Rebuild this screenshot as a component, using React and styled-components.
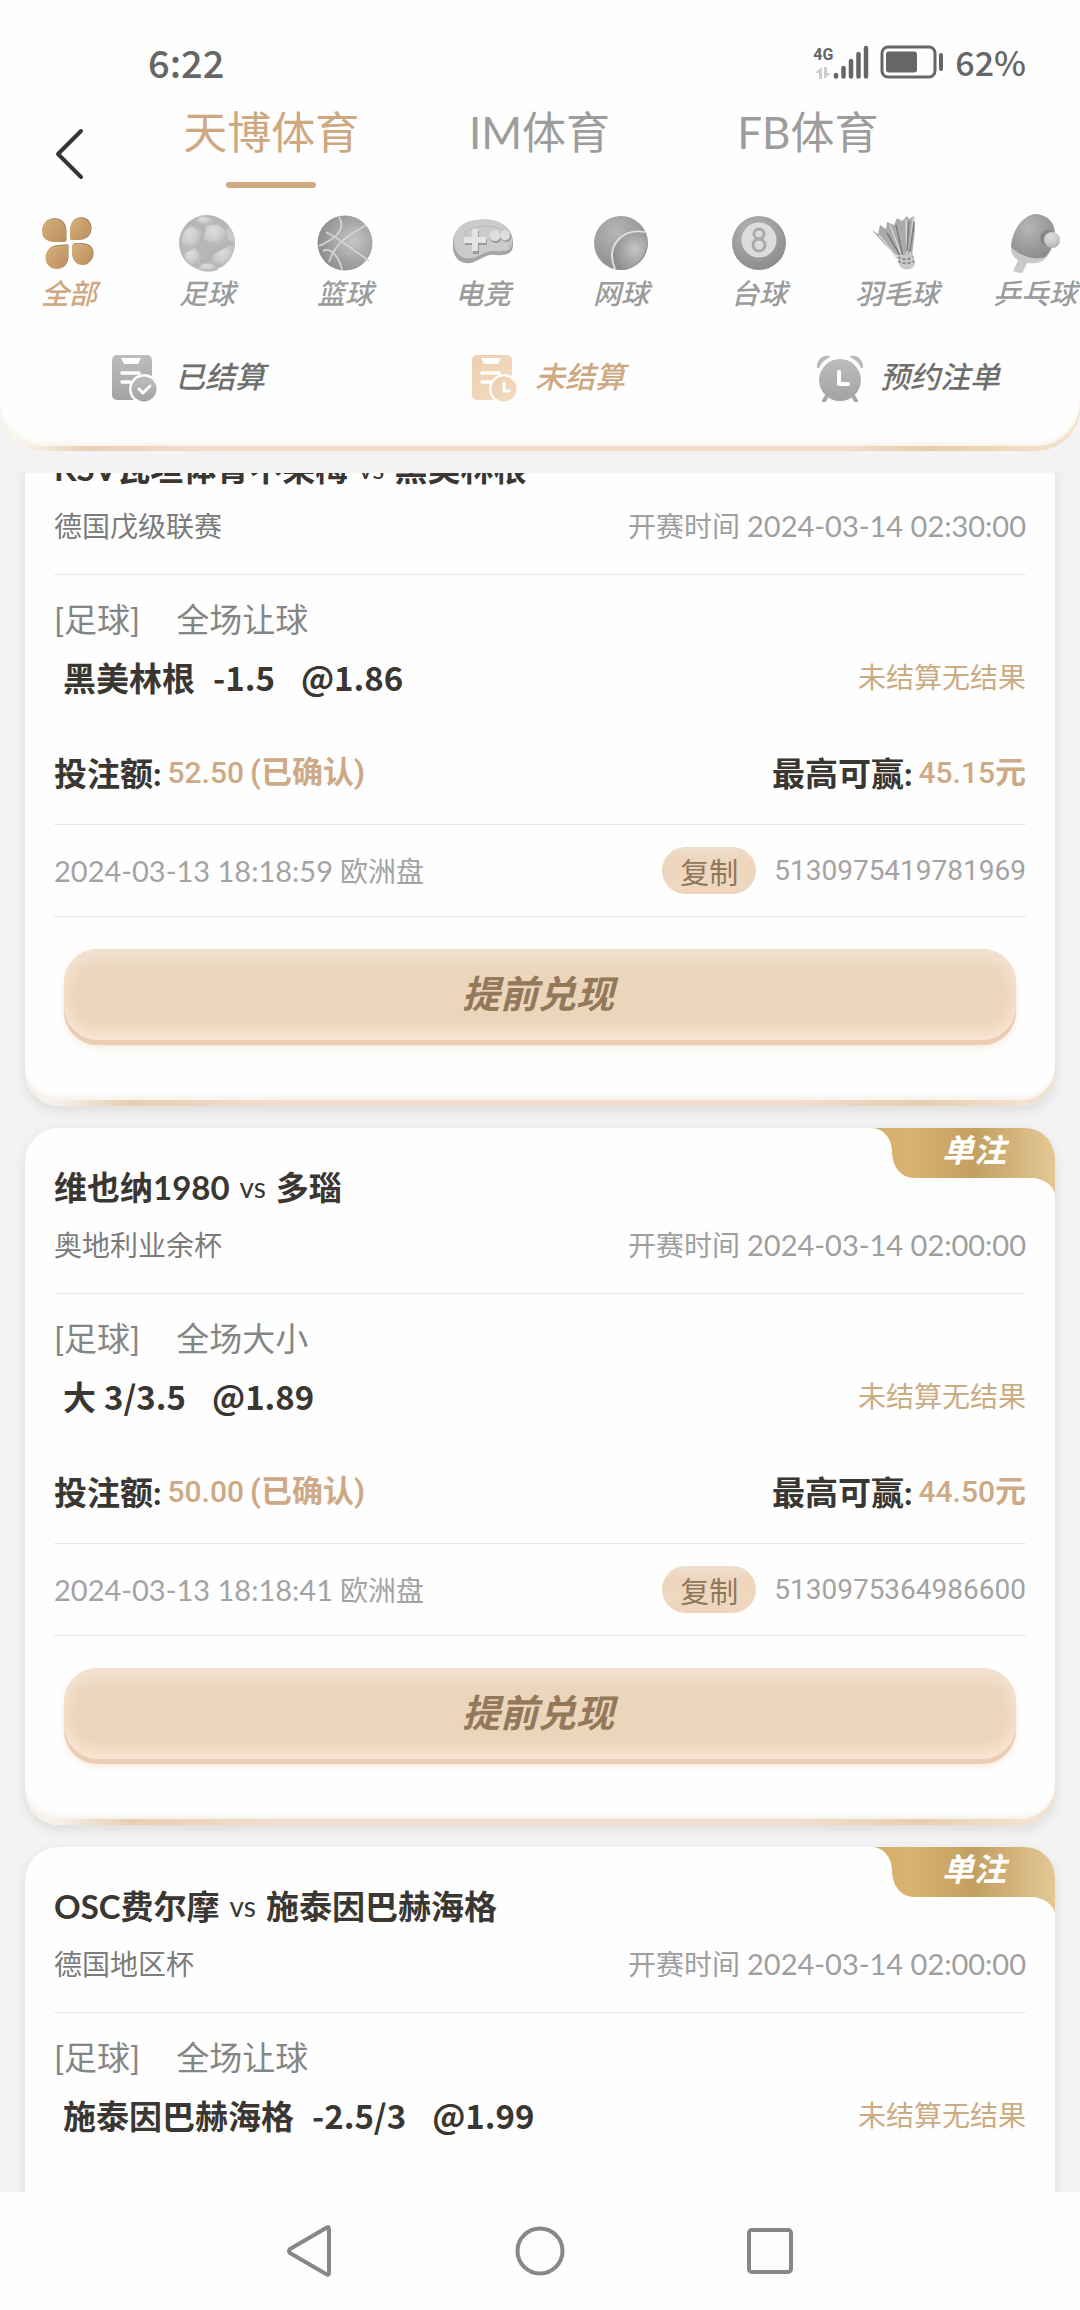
import React, { useLayoutEffect, useRef, useState } from 'react';
import styled, { createGlobalStyle } from 'styled-components';

const GlobalStyle = createGlobalStyle`
  *, *::before, *::after { box-sizing: border-box; }
  body {
    margin: 0;
    background: #f3f3f4;
    font-family: Lato, "Noto Sans CJK SC", sans-serif;
  }
  button {
    margin: 0;
    padding: 0;
    border: 0;
    background: none;
    color: inherit;
    font: inherit;
    cursor: pointer;
  }
  h2, p { margin: 0; font: inherit; }
  svg { display: block; flex: none; }
`;

const gold = '#cda880';

const Screen = styled.div`
  display: flex;
  flex-direction: column;
  height: 100vh;
  overflow: hidden;
`;

/* ---------- header ---------- */

const HeaderEdge = styled.header`
  flex: none;
  margin-bottom: 22px;
  padding-bottom: 5px;
  border-radius: 0 0 44px 44px;
  background: linear-gradient(90deg, #faf3ea 2%, #e9cfb4 8%, #f3ddcf 20%, #f3ddcf 78%, #e5cdab 86%, #f3e0c8 97%);
`;

const HeaderPanel = styled.div`
  padding-bottom: 44px;
  border-radius: 0 0 44px 44px;
  background: #fefefe;
  box-shadow: inset 0 -6px 5px -3px #f8f2e9;
`;

const StatusBar = styled.div`
  display: flex;
  align-items: center;
  justify-content: space-between;
  height: 92px;
  padding: 32px 54px 0 148px;
  color: #666;
`;

const Clock = styled.span`
  font-size: 38px;
  line-height: 56px;
  font-weight: 500;
  font-family: "Noto Sans CJK SC", sans-serif;
`;

const StatusIcons = styled.div`
  display: flex;
  align-items: center;
  gap: 11px;
`;

const Network = styled.div`
  display: flex;
  align-items: flex-end;
`;

const NetworkType = styled.div`
  display: flex;
  flex-direction: column;
  align-items: center;
  gap: 3px;
  font: 700 16px/18px Roboto, sans-serif;
`;

const Percent = styled.span`
  font: 500 34px/56px "Noto Sans CJK SC", sans-serif;
`;

const TopRow = styled.div`
  display: flex;
  height: 104px;
  padding-right: 138px;
`;

const BackButton = styled.button`
  display: flex;
  align-items: center;
  justify-content: center;
  width: 137px;
  margin-top: 20px;
`;

const Tabs = styled.nav`
  display: grid;
  flex: 1;
  grid-template-columns: repeat(3, 1fr);
`;

const Tab = styled.button`
  display: flex;
  flex-direction: column;
  align-items: center;
  gap: 20px;
  padding-top: 10px;
  color: ${(p) => (p.$active ? gold : '#9d9d9c')};
  font-size: 44px;
  line-height: 60px;
  white-space: nowrap;

  &::after {
    width: 90px;
    height: 6px;
    border-radius: 3px;
    background: ${(p) => (p.$active ? '#d1a981' : 'transparent')};
    content: '';
  }
`;

const Sports = styled.div`
  display: flex;
  padding-top: 17px;
  overflow: hidden;
`;

const Sport = styled.button`
  display: flex;
  flex: 0 0 138px;
  flex-direction: column;
  align-items: center;
  gap: 2px;
  padding-bottom: 2px;
  color: ${(p) => (p.$active ? gold : '#9c9c9c')};
  font-size: 28px;
  font-style: italic;
  font-weight: 500;
  line-height: 36px;
`;

const Filters = styled.div`
  display: grid;
  grid-template-columns: repeat(3, 1fr);
  padding-top: 41px;
`;

const Filter = styled.button`
  display: flex;
  align-items: center;
  justify-content: center;
  gap: 16px;
  padding-left: 16px;
  color: ${(p) => (p.$active ? gold : '#6f6f6d')};
  font-size: 30px;
  font-style: italic;
  font-weight: 500;
  line-height: 44px;
`;

const FilterName = styled.span`
  padding-bottom: 4px;
`;

/* ---------- bet list ---------- */

const List = styled.main`
  display: flex;
  flex: 1;
  flex-direction: column;
  gap: 22px;
  min-height: 0;
  padding: 0 25px;
  overflow-y: auto;
  scrollbar-width: none;
`;

const CardEdge = styled.article`
  position: relative;
  flex: none;
  padding-bottom: 6px;
  border-radius: 34px;
  background: linear-gradient(90deg, #f6f1ea 3%, #e8cfb3 10%, #f3ddce 25%, #f3ddce 75%, #e6ceb0 87%, #f4e2d0 97%);
  box-shadow: 0 4px 12px rgba(60, 50, 40, 0.12);
`;

const CardBody = styled.div`
  padding: 35px 29px 55px;
  border-radius: 34px;
  background: #fefefe;
  box-shadow: inset 0 -6px 5px -3px #f6f1ea;
`;

const Title = styled.h2`
  display: flex;
  align-items: center;
  gap: 10px;
  color: #3a3631;
  font-size: 33px;
  font-weight: 700;
  line-height: 48px;
`;

const Versus = styled.span`
  font-size: 28px;
  font-weight: 400;
`;

const Row = styled.div`
  display: flex;
  align-items: center;
  justify-content: space-between;
`;

const LeagueRow = styled(Row)`
  height: 83px;
  padding-bottom: 14px;
  border-bottom: 1px solid #e9e9e9;
  color: #7b7b7b;
  font-size: 28px;
  line-height: 40px;
`;

const Kickoff = styled.span`
  display: flex;
  gap: 7px;
  color: #9f9f9f;
`;

const Stamp = styled.time`
  font-size: 29px;
`;

const Market = styled.p`
  display: flex;
  gap: 36px;
  margin-top: 20px;
  color: #858585;
  font-size: 33px;
  line-height: 48px;
`;

const PickRow = styled(Row)`
  margin-top: 10px;
  padding-left: 9px;
`;

const Pick = styled.p`
  display: flex;
  color: #3a3631;
  font-family: "Noto Sans CJK SC", sans-serif;
  font-size: 33px;
  font-weight: 700;
  line-height: 48px;
`;

const Handicap = styled.span`
  margin-left: ${(p) => (p.$spaced ? 18 : 8)}px;
`;

const Odds = styled.span`
  margin-left: 26px;
`;

const Result = styled.span`
  color: #cbab82;
  font-size: 28px;
  line-height: 48px;
`;

const StakeRow = styled(Row)`
  margin-top: 48px;
  padding-bottom: 27px;
  border-bottom: 1px solid #e9e9e9;
`;

const Stake = styled.p`
  display: flex;
  gap: 6px;
  color: #3a3631;
  font-size: 33px;
  font-weight: 700;
  line-height: 48px;
`;

const Amount = styled.span`
  display: flex;
  color: #cea986;
  font-family: Roboto, "Noto Sans CJK SC", sans-serif;
  font-size: 31px;
`;

const Figure = styled.span`
  margin-right: ${(p) => (p.$spaced ? 6 : 0)}px;
  font-size: 30px;
  font-weight: 500;
`;

const RecordRow = styled(Row)`
  height: 92px;
  border-bottom: 1px solid #e6e6e6;
  color: #a3a3a3;
  font-size: 28px;
  line-height: 40px;
`;

const Placed = styled.span`
  display: flex;
  gap: 7px;
`;

const Ticket = styled.div`
  display: flex;
  align-items: center;
  gap: 18px;
  font-family: Roboto, sans-serif;
`;

const CopyButton = styled.button`
  width: 94px;
  height: 47px;
  border-radius: 24px;
  background: linear-gradient(180deg, #ebdfcb, #efd5bd 30%, #eed8bf 75%, #f1d3bd);
  color: #8f775b;
  font: 400 29px/44px "Noto Sans CJK SC", sans-serif;
`;

const CashOutButton = styled.button`
  display: block;
  width: calc(100% - 20px);
  height: 96px;
  margin: 32px 10px 0;
  padding: 0 4px 8px 0;
  border-radius: 34px;
  background: #ebd5bb;
  box-shadow:
    inset 0 -5px 0 #eacdb4,
    inset 0 -20px 14px -6px #f9e6d3,
    inset 0 14px 18px -4px #f2e2d3,
    inset 0 0 18px #f5dfc8,
    0 3px 6px #f6ebdd;
  color: #93785a;
  font-size: 38px;
  font-style: italic;
  font-weight: 700;
  line-height: 84px;
`;

const Badge = styled.div`
  position: absolute;
  top: 0;
  right: 0;
  display: grid;
  width: 182px;
  height: 66px;
  color: #fff;
  font-size: 32px;
  font-style: italic;
  font-weight: 700;
  line-height: 44px;

  > * { grid-area: 1 / 1; }
`;

const BadgeText = styled.span`
  z-index: 1;
  padding-left: 20px;
  text-align: center;
`;

/* ---------- system navigation ---------- */

const SystemNav = styled.nav`
  display: flex;
  flex: none;
  align-items: center;
  justify-content: center;
  height: 118px;
  background: #fdfdfd;
`;

const SystemButton = styled.button`
  display: flex;
  justify-content: center;
  width: 230px;
`;

/* ---------- drawings ---------- */

const Defs = () => (
  <svg width="0" height="0" style={{ position: 'absolute' }} aria-hidden="true">
    <defs>
      <linearGradient id="petal" x1="0" y1="0" x2="1" y2="1">
        <stop offset="0" stopColor="#d8b07a" /><stop offset="1" stopColor="#b98f5e" />
      </linearGradient>
      <radialGradient id="light" cx=".4" cy=".3" r=".75">
        <stop offset="0" stopColor="#dedede" /><stop offset=".6" stopColor="#c9c9c9" /><stop offset="1" stopColor="#a9a9a9" />
      </radialGradient>
      <radialGradient id="mid" cx=".65" cy=".45" r=".7">
        <stop offset="0" stopColor="#c6c6c6" /><stop offset=".5" stopColor="#a6a6a6" /><stop offset="1" stopColor="#8a8a8a" />
      </radialGradient>
      <radialGradient id="dark" cx=".4" cy=".3" r=".8">
        <stop offset="0" stopColor="#b5b5b5" /><stop offset="1" stopColor="#888" />
      </radialGradient>
      <linearGradient id="grey" x1="0" y1="0" x2="0" y2="1">
        <stop offset="0" stopColor="#bdbdbd" /><stop offset="1" stopColor="#a3a3a3" />
      </linearGradient>
      <linearGradient id="peach" x1="0" y1="0" x2="1" y2="1">
        <stop offset="0" stopColor="#edcfae" /><stop offset="1" stopColor="#f3dcc3" />
      </linearGradient>
      <linearGradient id="ribbon">
        <stop offset="0" stopColor="#d3ad68" /><stop offset=".2" stopColor="#d9b470" />
        <stop offset=".55" stopColor="#c39f62" /><stop offset="1" stopColor="#e4c894" />
      </linearGradient>
    </defs>
  </svg>
);

const Icon60 = ({ children }) => (
  <svg width="60" height="60" viewBox="0 0 60 60" fill="none" aria-hidden="true">{children}</svg>
);

const AllIcon = () => (
  <Icon60>
    <g fill="#8f7250" transform="translate(.5 -.7)">
      <path d="M15 6c8 0 12 6 12 13v8c0 2-1 2-3 2h-9C8 29 3 25 3 18S8 6 15 6Z" />
      <path d="M42 5c6 0 10 5 10 11 0 7-5 11-12 11h-7c-2 0-2-1-2-2v-8C31 10 35 5 42 5Z" />
      <path d="M18 33l9-1c2 0 2 1 2 3v9c0 7-4 12-11 12S6.500 51 6.500 45 11 33 18 33Z" />
      <path d="M35 31h8c7 0 11 4 11 10s-5 11-10 11c-7 0-11-5-11-12v-7c0-1 1-2 2-2Z" />
    </g>
    <g fill="url(#petal)">
      <path d="M15 6c8 0 12 6 12 13v8c0 2-1 2-3 2h-9C8 29 3 25 3 18S8 6 15 6Z" />
      <path d="M42 5c6 0 10 5 10 11 0 7-5 11-12 11h-7c-2 0-2-1-2-2v-8C31 10 35 5 42 5Z" />
      <path d="M18 33l9-1c2 0 2 1 2 3v9c0 7-4 12-11 12S6.500 51 6.500 45 11 33 18 33Z" />
      <path d="M35 31h8c7 0 11 4 11 10s-5 11-10 11c-7 0-11-5-11-12v-7c0-1 1-2 2-2Z" />
    </g>
  </Icon60>
);

const FootballIcon = () => (
  <Icon60>
    <circle cx="30" cy="30" r="28" fill="#b6b6b6" />
    <g fill="url(#light)" stroke="#c2c2c2">
      <path d="M29 13l12-2 9 8-2 9-13 5-8-8Z" />
      <path d="M15 13l9 6-3 12-13 6-4-10 4-10Z" />
      <path d="M9 39l9-4 6 9-4 10C13 52 9 47 7 42Z" />
      <path d="M36 42l12-7 9-3c0 9-6 18-13 22l-8-5Z" />
      <path d="M25 51l9-1 7 6c-5 3-15 3-20 0Z" />
      <path d="M24 3l9 2 4 4-8 3-10-4Z" />
    </g>
    <path d="M51 13c4 5 7 11 6 17l-6-4-1-6Z" fill="#c9c9c9" />
  </Icon60>
);

const BasketballIcon = () => (
  <Icon60>
    <circle cx="30" cy="30" r="27.500" fill="url(#mid)" />
    <g stroke="#d3d3d3" strokeWidth="1.800">
      <path d="M24 4c5 8 1 17-7 22-5 3-10 6-13 7" />
      <path d="M51 12C38 20 25 26 18 40c-2 3-3 6-4 9" />
      <path d="M8 38c8-5 17 8 19 19" />
      <path d="M11 19c11 6 23 14 43 29" />
    </g>
  </Icon60>
);

const GamepadIcon = () => (
  <Icon60>
    <path d="M1 23C6 9 22 5 38 7c12 2 21 9 22 22 1 11-5 14-17 13-11-2-17 7-26 8C5 52-4 40 1 23Z" fill="#a5a5a5" />
    <path d="M2 21C8 9 22 5 38 7c12 2 20 9 21 21 0 9-5 11-16 10-11-1-18 7-25 7C7 47-2 37 2 21Z" fill="#cbcbcb" />
    <path d="M10 23C16 12 38 11 48 16c8 4 10 15 7 19" stroke="#b8b8b8" />
    <path d="M19 17h6v8h8v6h-8v9h-6v-9h-8v-6h8Z" fill="#9c9c9c" transform="translate(1 1)" />
    <path d="M19 16h6v8h8v6h-8v8h-6v-8h-8v-6h8Z" fill="#e4e4e4" />
    <circle cx="43" cy="24" r="6" fill="#989898" /><circle cx="53" cy="24" r="5" fill="#989898" />
    <circle cx="42" cy="22.500" r="5.500" fill="#dedede" /><circle cx="52" cy="22.500" r="5" fill="#dedede" />
  </Icon60>
);

const TennisIcon = () => (
  <Icon60>
    <circle cx="30" cy="30" r="27" fill="url(#dark)" />
    <path d="M55 20C34 16 14 32 24 56c18 6 36-14 31-36Z" fill="url(#mid)" />
    <path d="M54 19C32 15 14 32 24 56" stroke="#dedede" strokeWidth="2" />
  </Icon60>
);

const PoolIcon = () => (
  <Icon60>
    <circle cx="30" cy="30" r="27" fill="url(#dark)" />
    <circle cx="30" cy="27" r="17.500" fill="#dcdcdc" />
    <circle cx="30" cy="21" r="5" stroke="#aaa" strokeWidth="3" />
    <circle cx="30" cy="32" r="6" stroke="#aaa" strokeWidth="3" />
  </Icon60>
);

const ShuttleIcon = () => (
  <Icon60>
    <path d="M5 17l6 4 2-9 6 4 1-7 7 3 3-7 5 3 5-5 2 3 5-3 1 13-3 28-12 1L18 32Z" fill="#ababab" />
    <path d="M12 22l19 24M23 12l12 32M39 6l1 38M46 5l-3 37" stroke="#d4d4d4" strokeWidth="1.500" />
    <path d="M20 20l14 24M29 12l7 32M42 8l-2 30M47 9l-4 30" stroke="#7c7c7c" strokeWidth="1.500" />
    <path d="M31 42l15-1 2 8c1 8-13 11-16 2Z" fill="#c9c9c9" />
    <path d="M31 44c4 3 10 3 15 0M31 48c5 3 11 3 16 0" stroke="#888" strokeDasharray="3 2" strokeWidth="2" />
  </Icon60>
);

const PingPongIcon = () => (
  <Icon60>
    <path d="M14 45l9 3-6 13-9-3Z" fill="#cbcbcb" />
    <path d="M6 35C7 17 18 2 31 1c14 1 22 13 18 27-2 9-7 19-14 21-12 4-30-1-29-14Z" fill="#c9c9c9" />
    <path d="M6 34C7 17 18 2 31 1c14 1 22 13 18 27-2 7-5 12-9 16-10 4-25-1-34-10Z" fill="url(#dark)" />
    <circle cx="43" cy="25" r="8" fill="#7c7c7c" opacity=".7" />
    <circle cx="47" cy="27" r="8" fill="url(#light)" />
  </Icon60>
);

const FormIcon = ({ paint, clock }) => (
  <svg width="48" height="48" viewBox="0 0 48 48" fill="none" aria-hidden="true">
    <rect x="1" y="1" width="40" height="45" rx="5" fill={`url(#${paint})`} />
    <path d="M10 4h20l-3 6H13Z" fill="#fff" />
    <path d="M11 19h17M11 28h8" stroke="#fff" strokeWidth="3.500" strokeLinecap="round" />
    <circle cx="33" cy="35" r="15" fill="#fefefe" />
    <circle cx="33" cy="35" r="12.500" fill={`url(#${paint})`} />
    <path
      d={clock ? 'M33 29v8h5' : 'M28 35l4 4 7-7'}
      stroke="#fff" strokeWidth="3" strokeLinecap="round" strokeLinejoin="round"
    />
  </svg>
);

const AlarmIcon = () => (
  <svg width="48" height="48" viewBox="0 0 48 48" fill="none" aria-hidden="true">
    <g fill="#b9b9b9">
      <path d="M1 14C0 5 9-1 15 3 9 5 5 9 3 14Z" />
      <path d="M47 14C48 5 39-1 33 3c6 2 10 6 12 11Z" />
    </g>
    <path d="M12 40l-4 7M36 40l4 7" stroke="#a6a6a6" strokeWidth="4" strokeLinecap="round" />
    <circle cx="24" cy="26" r="21" fill="url(#grey)" />
    <path d="M23 18v12h9" stroke="#fff" strokeWidth="4" strokeLinecap="round" strokeLinejoin="round" />
  </svg>
);

const SignalIcon = () => (
  <svg width="36" height="34" viewBox="0 0 36 34" stroke="#666" strokeWidth="4.500" strokeLinecap="round" aria-hidden="true">
    <path d="M3 30v1.500M10.500 23v8.500M18 16v15.500M25.500 9v22.500M33 3v28.500" />
  </svg>
);

const DataArrows = () => (
  <svg width="16" height="12" viewBox="0 0 16 12" fill="#cdcdcd" aria-hidden="true">
    <path d="M7 0v12H4V6H0ZM9 0v12l7-6h-4V0Z" />
  </svg>
);

const BatteryIcon = () => (
  <svg width="64" height="34" viewBox="0 0 64 34" fill="none" aria-hidden="true">
    <rect x="2" y="2" width="53" height="30" rx="6" stroke="#666" strokeWidth="3" />
    <rect x="6" y="6.500" width="31" height="21" rx="3" fill="#666" />
    <path d="M61 10v14" stroke="#666" strokeWidth="4" strokeLinecap="round" />
  </svg>
);

/* ---------- data ---------- */

const tabs = ['天博体育', 'IM体育', 'FB体育'];

const sports = [
  ['全部', AllIcon],
  ['足球', FootballIcon],
  ['篮球', BasketballIcon],
  ['电竞', GamepadIcon],
  ['网球', TennisIcon],
  ['台球', PoolIcon],
  ['羽毛球', ShuttleIcon],
  ['乒乓球', PingPongIcon],
];

const filters = [
  ['已结算', <FormIcon paint="grey" />],
  ['未结算', <FormIcon paint="peach" clock />],
  ['预约注单', <AlarmIcon />],
];

const bets = [
  {
    home: 'KSV瓦坦体育不莱梅', away: '黑美林根', league: '德国戊级联赛', kickoff: '2024-03-14 02:30:00',
    market: '全场让球', pick: '黑美林根', handicap: '-1.5', odds: '1.86', stake: '52.50', win: '45.15',
    placed: '2024-03-13 18:18:59', ticket: '5130975419781969',
  },
  {
    home: '维也纳1980', away: '多瑙', league: '奥地利业余杯', kickoff: '2024-03-14 02:00:00',
    market: '全场大小', pick: '大', handicap: '3/3.5', odds: '1.89', stake: '50.00', win: '44.50',
    placed: '2024-03-13 18:18:41', ticket: '5130975364986600',
  },
  {
    home: 'OSC费尔摩', away: '施泰因巴赫海格', league: '德国地区杯', kickoff: '2024-03-14 02:00:00',
    market: '全场让球', pick: '施泰因巴赫海格', handicap: '-2.5/3', odds: '1.99', stake: '50.00', win: '49.50',
    placed: '2024-03-13 18:18:20', ticket: '5130975310264418',
  },
];

const BetCard = ({ bet }) => (
  <CardEdge>
    <CardBody>
      <Title><span>{bet.home}</span><Versus>vs</Versus><span>{bet.away}</span></Title>
      <LeagueRow>
        <span>{bet.league}</span>
        <Kickoff>开赛时间 <Stamp>{bet.kickoff}</Stamp></Kickoff>
      </LeagueRow>
      <Market><span>[足球]</span><span>{bet.market}</span></Market>
      <PickRow>
        <Pick>
          <span>{bet.pick}</span>
          <Handicap $spaced={bet.handicap.startsWith('-')}>{bet.handicap}</Handicap>
          <Odds>@{bet.odds}</Odds>
        </Pick>
        <Result>未结算无结果</Result>
      </PickRow>
      <StakeRow>
        <Stake>投注额: <Amount><Figure $spaced>{bet.stake}</Figure>(已确认)</Amount></Stake>
        <Stake>最高可赢: <Amount><Figure>{bet.win}</Figure>元</Amount></Stake>
      </StakeRow>
      <RecordRow>
        <Placed><Stamp>{bet.placed}</Stamp> 欧洲盘</Placed>
        <Ticket><CopyButton>复制</CopyButton>{bet.ticket}</Ticket>
      </RecordRow>
      <CashOutButton>提前兑现</CashOutButton>
    </CardBody>
    <Badge>
      <svg width="182" height="66" viewBox="0 0 182 66" aria-hidden="true">
        <path d="M0 0C11 1 18 10 19 22C19 38 27 50 42 50H158C171 50 180 58 182 66V32C182 13 169 0 150 0Z" fill="url(#ribbon)" />
      </svg>
      <BadgeText>单注</BadgeText>
    </Badge>
  </CardEdge>
);

export default function App() {
  const [tab, setTab] = useState(0);
  const [sport, setSport] = useState(0);
  const [filter, setFilter] = useState(1);
  const list = useRef(null);

  useLayoutEffect(() => {
    list.current.scrollTop = 64;
  }, []);

  return (
    <Screen>
      <GlobalStyle />
      <Defs />
      <HeaderEdge>
        <HeaderPanel>
          <StatusBar>
            <Clock>6:22</Clock>
            <StatusIcons>
              <Network>
                <NetworkType>4G<DataArrows /></NetworkType>
                <SignalIcon />
              </Network>
              <BatteryIcon />
              <Percent>62%</Percent>
            </StatusIcons>
          </StatusBar>
          <TopRow>
            <BackButton aria-label="返回">
              <svg width="30" height="54" viewBox="0 0 30 54" fill="none" aria-hidden="true">
                <path d="M27 4L4 27l23 23" stroke="#3a3535" strokeWidth="4" strokeLinecap="round" strokeLinejoin="round" />
              </svg>
            </BackButton>
            <Tabs>
              {tabs.map((name, i) => (
                <Tab key={name} $active={i === tab} onClick={() => setTab(i)}>{name}</Tab>
              ))}
            </Tabs>
          </TopRow>
          <Sports>
            {sports.map(([name, Icon], i) => (
              <Sport key={name} $active={i === sport} onClick={() => setSport(i)}><Icon />{name}</Sport>
            ))}
          </Sports>
          <Filters>
            {filters.map(([name, icon], i) => (
              <Filter key={name} $active={i === filter} onClick={() => setFilter(i)}>
                {icon}<FilterName>{name}</FilterName>
              </Filter>
            ))}
          </Filters>
        </HeaderPanel>
      </HeaderEdge>
      <List ref={list}>
        {bets.map((bet) => <BetCard key={bet.ticket} bet={bet} />)}
      </List>
      <SystemNav>
        <SystemButton aria-label="返回上一页">
          <svg width="50" height="54" viewBox="0 0 50 54" fill="none" aria-hidden="true">
            <path d="M44 5v44q0 3-3 1L5 29q-2-2 0-4L41 4q3-2 3 1Z" stroke="#878787" strokeWidth="4" strokeLinejoin="round" />
          </svg>
        </SystemButton>
        <SystemButton aria-label="主屏幕">
          <svg width="50" height="50" viewBox="0 0 50 50" fill="none" aria-hidden="true">
            <circle cx="25" cy="25" r="22.500" stroke="#878787" strokeWidth="4" />
          </svg>
        </SystemButton>
        <SystemButton aria-label="最近任务">
          <svg width="50" height="50" viewBox="0 0 50 50" fill="none" aria-hidden="true">
            <rect x="4" y="4" width="42" height="42" rx="3" stroke="#878787" strokeWidth="4" />
          </svg>
        </SystemButton>
      </SystemNav>
    </Screen>
  );
}
